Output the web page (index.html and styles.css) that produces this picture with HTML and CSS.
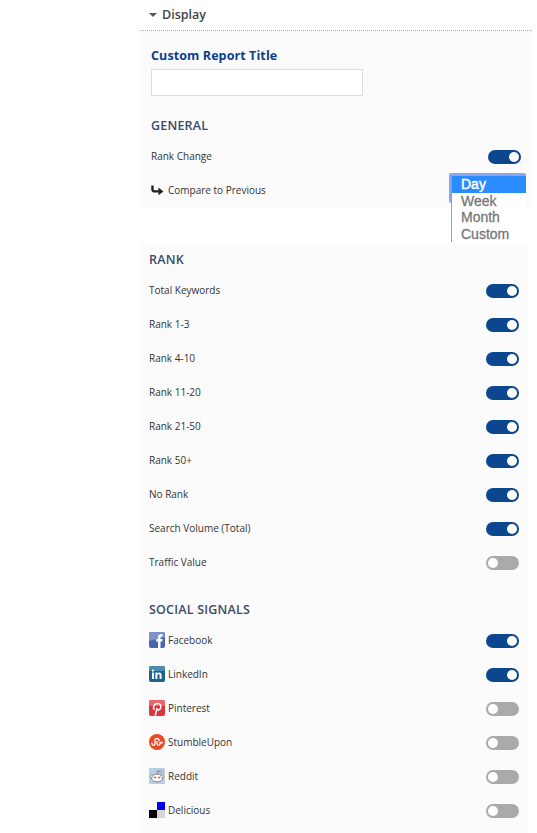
FILE: index.html
```html
<!DOCTYPE html>
<html lang="en">
<head>
  <meta charset="UTF-8">
  <title>Display</title>
  <link rel="stylesheet" href="styles.css">
</head>
<body>

<div class="display-section">
  <div class="section-header">
    <span class="caret"></span>
    <span>Display</span>
  </div>

  <div class="panel panel-general">
    <label class="title-label" for="reportTitle">Custom Report Title</label>
    <input class="title-input" type="text" id="reportTitle">

    <h3 class="group-title general-title">GENERAL</h3>
    <div class="row">
      <span class="row-label">Rank Change</span>
      <span class="toggle on"></span>
    </div>
    <div class="row">
      <span class="row-label">
        <svg class="icon-sub" viewBox="0 0 14 12"><path d="M1.500 0.500V4.500Q1.500 7 4 7H8.500" fill="none" stroke="#222" stroke-width="2.600"/><path d="M8 2.800L13.500 7 8 11.200z" fill="#222"/></svg>
        Compare to Previous
      </span>
    </div>

    <ul class="period-list">
      <li class="selected">Day</li>
      <li>Week</li>
      <li>Month</li>
      <li>Custom</li>
    </ul>
  </div>

  <div class="panel panel-rank">
    <h3 class="group-title">RANK</h3>
    <div class="row"><span class="row-label">Total Keywords</span><span class="toggle on"></span></div>
    <div class="row"><span class="row-label">Rank 1-3</span><span class="toggle on"></span></div>
    <div class="row"><span class="row-label">Rank 4-10</span><span class="toggle on"></span></div>
    <div class="row"><span class="row-label">Rank 11-20</span><span class="toggle on"></span></div>
    <div class="row"><span class="row-label">Rank 21-50</span><span class="toggle on"></span></div>
    <div class="row"><span class="row-label">Rank 50+</span><span class="toggle on"></span></div>
    <div class="row"><span class="row-label">No Rank</span><span class="toggle on"></span></div>
    <div class="row"><span class="row-label">Search Volume (Total)</span><span class="toggle on"></span></div>
    <div class="row"><span class="row-label">Traffic Value</span><span class="toggle"></span></div>

    <h3 class="group-title social-title">SOCIAL SIGNALS</h3>
    <div class="row">
      <span class="row-label">
        <svg class="icon" viewBox="0 0 16 16"><rect width="16" height="16" rx="2" fill="#4a66ad"/><path d="M0 2a2 2 0 0 1 2-2h12a2 2 0 0 1 2 2v3C10 6 5 8 0 9z" fill="#7d93c9"/><path d="M9 16V9.400H7.200V7h1.800V5.200C9 3.200 10.200 2.200 12 2.200h1.600v2.400h-1.100c-.8 0-1 .4-1 1V7h2.100l-.3 2.400h-1.800V16z" fill="#fff"/></svg>
        Facebook
      </span>
      <span class="toggle on"></span>
    </div>
    <div class="row">
      <span class="row-label">
        <svg class="icon" viewBox="0 0 16 16"><rect width="16" height="16" rx="2" fill="#1c6390"/><path d="M0 2a2 2 0 0 1 2-2h12a2 2 0 0 1 2 2v3H0z" fill="#4b8bb0"/><path d="M3 6.600h2V13H3zM3 3.800h2v1.800H3zM6.400 6.600h1.900v.9c.4-.6 1-1 1.900-1 1.600 0 2.400 1 2.400 2.700V13h-2V9.600c0-.8-.3-1.300-1-1.300s-1.200.5-1.200 1.300V13h-2z" fill="#fff"/></svg>
        LinkedIn
      </span>
      <span class="toggle on"></span>
    </div>
    <div class="row">
      <span class="row-label">
        <svg class="icon" viewBox="0 0 16 16"><rect width="16" height="16" rx="2" fill="#d9363e"/><path d="M0 2a2 2 0 0 1 2-2h12a2 2 0 0 1 2 2v4H0z" fill="#e8666c"/><path d="M6.400 15l1.500-6.400M5 9.200C3.800 7 5.200 3.400 8.400 3.400c2.700 0 3.900 2 3.300 4.300-.5 2-2.700 3-4 1.700" fill="none" stroke="#fff" stroke-width="1.500" stroke-linecap="round"/></svg>
        Pinterest
      </span>
      <span class="toggle"></span>
    </div>
    <div class="row">
      <span class="row-label">
        <svg class="icon" viewBox="0 0 16 16"><circle cx="8" cy="8" r="8" fill="#eb4924"/><path d="M3 8.500v1.300a1.500 1.500 0 0 0 3 0V6.500a2 2 0 0 1 4 0v.8M8 7.300v2.500a1.500 1.500 0 0 0 3 0V8.500h2v1.300" fill="none" stroke="#fff" stroke-width="1.300"/></svg>
        StumbleUpon
      </span>
      <span class="toggle"></span>
    </div>
    <div class="row">
      <span class="row-label">
        <svg class="icon" viewBox="0 0 16 16"><rect width="16" height="16" rx="1" fill="#b7cde3"/><ellipse cx="8" cy="10" rx="5.600" ry="3.800" fill="#fff" stroke="#666" stroke-width=".7"/><circle cx="2.800" cy="8.300" r="1.300" fill="#fff" stroke="#666" stroke-width=".6"/><circle cx="13.200" cy="8.300" r="1.300" fill="#fff" stroke="#666" stroke-width=".6"/><circle cx="6" cy="9.600" r="1" fill="#e2562b"/><circle cx="10" cy="9.600" r="1" fill="#e2562b"/><path d="M8 6l.8-3.200 2.600.6" fill="none" stroke="#666" stroke-width=".7"/><circle cx="12" cy="3.500" r="1.100" fill="#fff" stroke="#666" stroke-width=".6"/></svg>
        Reddit
      </span>
      <span class="toggle"></span>
    </div>
    <div class="row">
      <span class="row-label">
        <svg class="icon" viewBox="0 0 16 16"><rect x="8" width="8" height="8" fill="#0000f0"/><rect y="8" width="8" height="8" fill="#000"/><rect x="8" y="8" width="8" height="8" fill="#d6d6d6"/></svg>
        Delicious
      </span>
      <span class="toggle"></span>
    </div>
  </div>
</div>

</body>
</html>
```

FILE: styles.css
```css
body {
  margin: 0;
  background: white;
  font-family: "Open Sans", Arial, sans-serif;
  color: #333;
}
.display-section {
  width: 391px;
  height: 833px;
  margin-left: 141px;
  overflow: hidden;
}
.section-header {
  display: flex;
  align-items: center;
  gap: 5px;
  height: 31px;
  padding-left: 8px;
  padding-bottom: 1px;
  border-bottom: 1px dotted #aaa;
  box-sizing: border-box;
  font-size: 12.500px;
  font-weight: 600;
  color: #444;
}
.caret {
  width: 0;
  height: 0;
  border-left: 4px solid transparent;
  border-right: 4px solid transparent;
  border-top: 4px solid #555;
}
.panel {
  background: #fbfbfb;
}
.panel-general {
  position: relative;
  height: 177px;
  padding: 16px 11px 0 10px;
  box-sizing: border-box;
}
.panel-rank {
  width: 387px;
  height: 590px;
  margin-top: 35px;
  padding: 8px 9px 0 8px;
  box-sizing: border-box;
}
.title-label {
  display: block;
  height: 22px;
  line-height: 17px;
  font-size: 12.500px;
  font-weight: 700;
  letter-spacing: 0.1px;
  color: #0b3f8c;
}
.title-input {
  display: block;
  width: 212px;
  height: 27px;
  padding: 0;
  background: white;
  border: 1px solid #ddd;
  box-sizing: border-box;
}
.group-title {
  margin: 0;
  height: 18px;
  line-height: 18px;
  font-size: 12.500px;
  font-weight: 600;
  letter-spacing: 0.2px;
  color: #3b4a68;
}
.general-title {
  margin-top: 21px;
  margin-bottom: 5px;
}
.panel-rank .group-title {
  margin-bottom: 5px;
}
.panel-rank .social-title {
  margin-top: 21px;
  margin-bottom: 5px;
}
.row {
  display: flex;
  justify-content: space-between;
  align-items: center;
  height: 34px;
}
.row-label {
  display: flex;
  align-items: center;
  gap: 3px;
  padding-bottom: 2px;
  font-size: 10px;
  color: #333;
}
.icon {
  width: 16px;
  height: 16px;
}
.icon-sub {
  width: 13px;
  height: 11px;
  margin-right: 1px;
}
.toggle {
  position: relative;
  width: 33px;
  height: 14px;
  border-radius: 7px;
  background: #aaa;
}
.toggle::after {
  content: "";
  position: absolute;
  top: 2px;
  left: 2px;
  width: 10px;
  height: 10px;
  border-radius: 50%;
  background: white;
}
.toggle.on {
  background: #0b468f;
}
.toggle.on::after {
  left: 21px;
}
.period-list {
  position: absolute;
  top: 142px;
  left: 308px;
  width: 77px;
  height: 69px;
  margin: 0;
  padding: 3px 0 0 0;
  list-style: none;
  overflow: hidden;
  box-sizing: border-box;
  background: white;
  font-family: "Liberation Sans", Arial, sans-serif;
  font-size: 14px;
  line-height: 16.500px;
  color: #777;
  -webkit-text-stroke: 0.3px #777;
}
/* focus ring sticking out behind the open list */
.period-list::before {
  content: "";
  position: absolute;
  top: 0;
  left: 0;
  width: 100%;
  height: 30px;
  border-radius: 2px;
  background: #8ba6e6;
}
.period-list li {
  position: relative;
  margin-left: 2px;
  padding-left: 9px;
  border-left: 1px solid #7fa2e0;
  background: white;
}
.period-list .selected {
  background: #2a8cff;
  color: white;
  -webkit-text-stroke: 0.4px white;
}
```
